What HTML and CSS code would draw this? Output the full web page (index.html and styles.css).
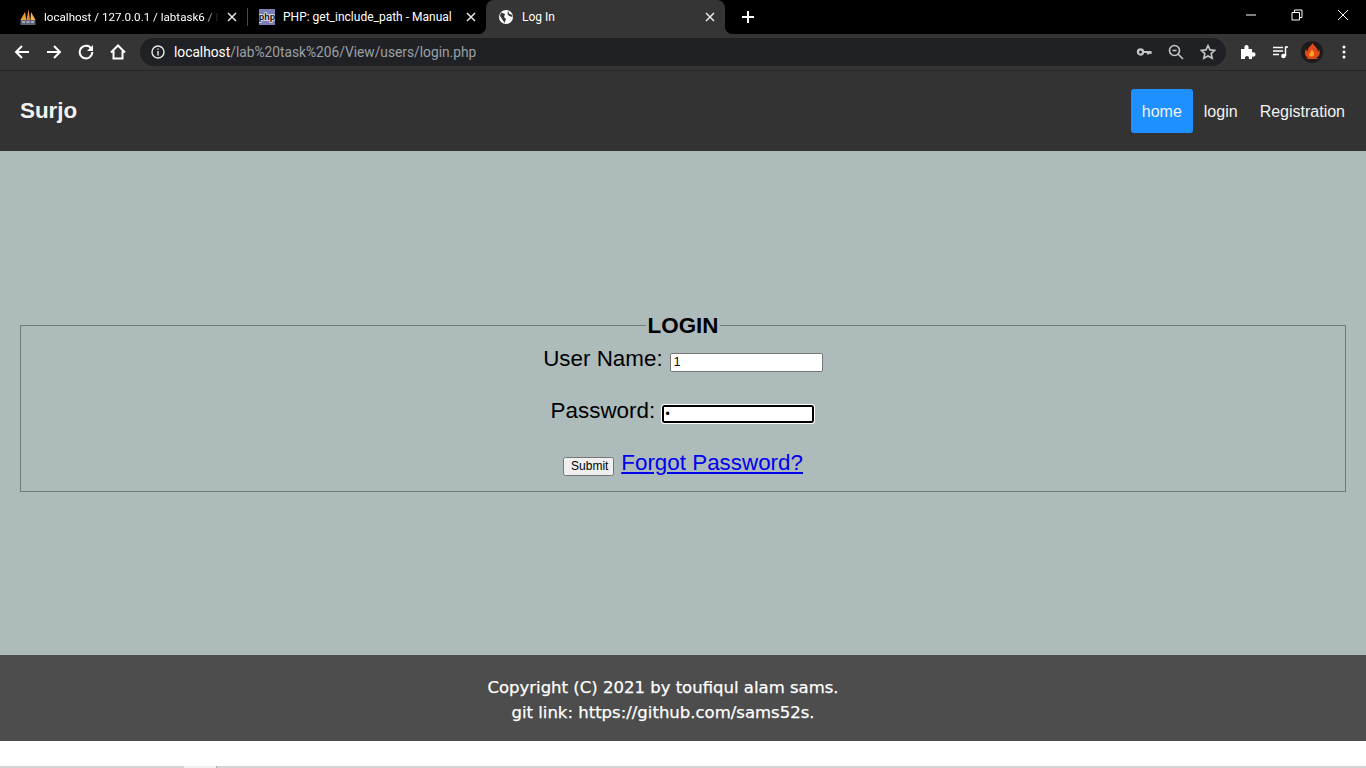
FILE: index.html
```html
<!DOCTYPE html>
<html lang="en">

<head>
    <meta charset="UTF-8" />
    <title>Log In</title>
    <link rel="stylesheet" href="styles.css">
</head>

<body>
    <div class="browser">
        <div class="tabstrip">
            <div class="tab">
                <svg class="favicon" viewBox="0 0 16 16">
                    <path d="M0.500 11 5 3l1.300 8z" fill="#f0a030" />
                    <path d="M6.500 11 8.500 0 10 11z" fill="#e8902a" />
                    <path d="M10.500 11 11 3l4.500 8z" fill="#f6b450" />
                    <rect x="0.500" y="11" width="15" height="5" fill="#5f6378" />
                    <path d="M2 13h3M6.500 13h3M11 13h3" stroke="#b8bccb" stroke-width="1.500" />
                </svg>
                <span class="tab-title fade">localhost / 127.0.0.1 / labtask6 / l</span>
                <svg class="tab-close" viewBox="0 0 10 10"><path d="M1 1l8 8M9 1l-8 8" /></svg>
            </div>
            <div class="tab tab-sep">
                <svg class="favicon" viewBox="0 0 16 16">
                    <rect width="16" height="16" fill="#7b7fb5" />
                    <text x="8" y="11" text-anchor="middle" class="php-mark">php</text>
                </svg>
                <span class="tab-title">PHP: get_include_path - Manual</span>
                <svg class="tab-close" viewBox="0 0 10 10"><path d="M1 1l8 8M9 1l-8 8" /></svg>
            </div>
            <div class="tab tab-active">
                <svg class="favicon" viewBox="0 0 16 16">
                    <circle cx="8" cy="8" r="7" fill="#fff" />
                    <path d="M3 3.500 7 5 6 8 8 10 6.500 14 4 10 2 7zM10 1.500l1 3 3 1.500 .5 2L11 7 9.500 5z" fill="#353535" />
                </svg>
                <span class="tab-title">Log In</span>
                <svg class="tab-close" viewBox="0 0 10 10"><path d="M1 1l8 8M9 1l-8 8" /></svg>
            </div>
            <svg class="new-tab" viewBox="0 0 12 12"><path d="M6 0v12M0 6h12" /></svg>
            <div class="win-controls">
                <div class="win-btn"><svg viewBox="0 0 12 12"><path d="M1 6h10" /></svg></div>
                <div class="win-btn"><svg viewBox="0 0 12 12"><path d="M1 3.500h7.500v7.500H1zM3.500 3.500V1H11v7.500H8.500" /></svg></div>
                <div class="win-btn"><svg viewBox="0 0 12 12"><path d="M1 1l10 10M11 1 1 11" /></svg></div>
            </div>
        </div>

        <div class="toolbar">
            <div class="tool"><svg viewBox="0 0 16 16"><path class="line" d="M15 8H2M8 2 2 8l6 6" /></svg></div>
            <div class="tool"><svg viewBox="0 0 16 16"><path class="line" d="M1 8h13M8 2l6 6-6 6" /></svg></div>
            <div class="tool"><svg viewBox="0 0 16 16"><path class="line" d="M13.500 5A6.300 6.300 0 1 0 14.300 8" /><path class="solid" d="M15 1v6H9z" /></svg></div>
            <div class="tool"><svg viewBox="0 0 16 16"><path class="line" d="M1 8.500 8 1.500l7 7M3.500 7v7.500h9V7" /></svg></div>

            <div class="omnibox">
                <svg class="info" viewBox="0 0 14 14">
                    <circle cx="7" cy="7" r="6" />
                    <path d="M7 6v4.500M7 3.500v1.300" />
                </svg>
                <span class="url"><b>localhost</b>/lab%20task%206/View/users/login.php</span>
                <div class="omni-icons">
                    <div class="tool"><svg viewBox="0 0 16 16"><circle class="key" cx="4.500" cy="8" r="2.600" /><path class="key" d="M7 8h8.500M12 8v2.500M14.500 8v2" /></svg></div>
                    <div class="tool"><svg viewBox="0 0 16 16"><circle class="dim" cx="6.500" cy="6.500" r="5" /><path class="dim" d="M4.500 6.500h4M10 10l5 5" /></svg></div>
                    <div class="tool"><svg viewBox="0 0 16 16"><path class="dim" d="M8 1.500l2 4.400 4.700.5-3.500 3.200 1 4.700L8 12l-4.200 2.300 1-4.700L1.300 6.400 6 5.900z" /></svg></div>
                </div>
            </div>

            <div class="tool-group">
                <div class="tool"><svg viewBox="0 0 16 16"><path class="solid" d="M1 5h3.500C4 2.500 5 1 6.500 1S9 2.500 8.500 5H12v3.500c2.500-.5 3.500.5 3.500 2s-1 2.500-3.500 2V15H9c.3-2-.7-3-2-3s-2.300 1-2 3H1z" /></svg></div>
                <div class="tool"><svg viewBox="0 0 16 16"><path class="thin" d="M1 3.500h10M1 7h10M1 10.500h6" /><path class="thin" d="M13.500 3v9" /><path class="thin" d="M13 3h3" /><circle class="solid" cx="11.500" cy="12" r="2.300" /></svg></div>
                <div class="tool">
                    <div class="avatar">
                        <svg viewBox="0 0 22 22">
                            <path d="M12 2c0 3 5 4 5 9 1-1 1-3 1-3 2 4 0 8-3 9l3 1H5l2-1c-3-2-4-5-2-9 0 1 1 2 2 2-1-3 3-5 5-8z" fill="#e2491a" />
                            <path d="M11 8c0 2 3 3 2 6-1 2-4 2-5 0 0-2 2-3 3-6z" fill="#f5a623" />
                        </svg>
                    </div>
                </div>
                <div class="tool"><svg viewBox="0 0 16 16"><circle class="solid" cx="8" cy="3" r="1.500" /><circle class="solid" cx="8" cy="8" r="1.500" /><circle class="solid" cx="8" cy="13" r="1.500" /></svg></div>
            </div>
        </div>
    </div>

    <nav class="topnav">
        <a class="brand" href="#">Surjo</a>
        <div class="nav-links">
            <a class="nav-link active" href="#">home</a>
            <a class="nav-link" href="#">login</a>
            <a class="nav-link" href="#">Registration</a>
        </div>
    </nav>

    <main class="content">
        <form class="login-form" onsubmit="return false">
            <fieldset>
                <legend>LOGIN</legend>
                User Name: <input class="name-input" type="text" name="username" value="1" />
                <br><br>
                Password: <input class="focused" type="password" name="password" value="1" />
                <br><br>
                <input class="submit-btn" type="submit" value="Submit" />
                <a href="#">Forgot Password?</a>
            </fieldset>
        </form>
    </main>

    <footer class="site-footer">
        Copyright (C) 2021 by toufiqul alam sams.<br>
        git link: https://github.com/sams52s.
    </footer>

    <div class="blank"></div>
    <div class="shelf"><span class="shelf-seg"></span></div>
</body>

</html>
```

FILE: styles.css
```css
* {
    box-sizing: border-box;
}

body {
    margin: 0;
    height: 768px;
    overflow: hidden;
    display: flex;
    flex-direction: column;
    font-family: "Liberation Sans", Arial, sans-serif;
    background-color: #fff;
}

/* browser chrome */
.browser {
    flex: none;
    font-family: Roboto, "Open Sans", sans-serif;
    color: #fff;
}

.tabstrip {
    height: 34px;
    background-color: #000;
    display: flex;
    padding-left: 8px;
}

.tab {
    position: relative;
    width: 239px;
    display: flex;
    align-items: center;
    padding: 0 10px 0 12px;
    gap: 8px;
}

.tab-sep::before {
    content: "";
    position: absolute;
    left: 0;
    top: 8px;
    height: 18px;
    width: 1px;
    background-color: #4a4a4a;
}

.tab-active {
    background-color: #353535;
    border-radius: 8px 8px 0 0;
}

.tab-active::before,
.tab-active::after {
    content: "";
    position: absolute;
    bottom: 0;
    width: 8px;
    height: 8px;
}

.tab-active::before {
    left: -8px;
    background: radial-gradient(circle at 0 0, #000 8px, #353535 8.5px);
}

.tab-active::after {
    right: -8px;
    background: radial-gradient(circle at 100% 0, #000 8px, #353535 8.5px);
}

.favicon {
    width: 16px;
    height: 16px;
    flex: none;
}

.php-mark {
    font-family: "Liberation Sans", sans-serif;
    font-size: 9px;
    font-weight: bold;
    fill: #111;
    stroke: #e8e8f0;
    stroke-width: 1.500px;
    paint-order: stroke;
}

.tab-title {
    flex: 1;
    min-width: 0;
    font-size: 12px;
    white-space: nowrap;
    overflow: hidden;
}

.fade {
    font-size: 11.600px;
    -webkit-mask-image: linear-gradient(to right, #000 92%, transparent 100%);
    mask-image: linear-gradient(to right, #000 92%, transparent 100%);
}

.tab-close {
    width: 10px;
    height: 10px;
    flex: none;
    fill: none;
    stroke: #e8eaed;
    stroke-width: 1.500;
}

.new-tab {
    width: 12px;
    height: 12px;
    margin: 11px 0 0 17px;
    fill: none;
    stroke: #fff;
    stroke-width: 2;
}

.win-controls {
    margin-left: auto;
    display: flex;
    align-items: flex-start;
}

.win-btn {
    width: 46px;
    height: 30px;
    display: flex;
    align-items: center;
    justify-content: center;
}

.win-btn svg {
    width: 12px;
    height: 12px;
    fill: none;
    stroke: #fff;
    stroke-width: 1;
}

.toolbar {
    height: 37px;
    background-color: #353535;
    border-bottom: 1px solid #262626;
    padding: 4px 6px;
    display: flex;
    align-items: center;
}

.tool {
    width: 32px;
    height: 28px;
    flex: none;
    display: flex;
    align-items: center;
    justify-content: center;
}

.tool svg {
    width: 16px;
    height: 16px;
    fill: none;
}

.line {
    stroke: #fff;
    stroke-width: 2;
    fill: none;
}

.thin {
    stroke: #fff;
    stroke-width: 1.500;
    fill: none;
}

.solid {
    fill: #fff;
}

.dim {
    stroke: #c4c7c5;
    stroke-width: 1.600;
    fill: none;
}

.key {
    stroke: #c4c7c5;
    stroke-width: 2.200;
    fill: none;
}

.omnibox {
    flex: 1;
    height: 28px;
    margin: 0 6px;
    padding-left: 11px;
    background-color: #202124;
    border-radius: 14px;
    display: flex;
    align-items: center;
}

.info {
    width: 14px;
    height: 14px;
    flex: none;
    fill: none;
    stroke: #e8eaed;
    stroke-width: 1.400;
}

.url {
    margin-left: 9px;
    font-size: 13.750px;
    color: #9aa0a6;
    white-space: nowrap;
}

.url b {
    font-weight: normal;
    color: #fff;
}

.omni-icons {
    margin-left: auto;
    display: flex;
    padding-right: 2px;
}

.tool-group {
    display: flex;
}

.avatar {
    width: 22px;
    height: 22px;
    border-radius: 50%;
    background-color: #1d1a19;
    overflow: hidden;
}

.avatar svg {
    width: 22px;
    height: 22px;
    display: block;
}

/* site nav */
.topnav {
    flex: none;
    height: 80px;
    background-color: #333;
    padding: 0 10px 0 20px;
    display: flex;
    align-items: center;
    justify-content: space-between;
}

.brand {
    font-size: 22.4px;
    font-weight: bold;
    color: #f2f2f2;
    text-decoration: none;
}

.nav-links {
    display: flex;
}

.nav-link {
    padding: 15px 11px 13px;
    font-size: 16px;
    line-height: 16px;
    color: #f2f2f2;
    text-decoration: none;
    border-radius: 3px;
}

.nav-link.active {
    background-color: dodgerblue;
}

/* login form */
.content {
    flex: none;
    height: 504px;
    background-color: #aebbbb;
    padding: 0 20px 1px;
    display: flex;
    flex-direction: column;
    justify-content: center;
}

.login-form {
    font-size: 22.4px;
    text-align: center;
    color: #000;
}

fieldset {
    margin: 0;
    padding-bottom: 15px;
    border: 1px solid #6f7a79;
}

legend {
    font-weight: bold;
}

input {
    font-family: "Liberation Sans", Arial, sans-serif;
    font-size: 12px;
    width: 153px;
    height: 19px;
}

.name-input {
    margin-left: 1px;
}

input.focused {
    width: 154px;
    height: 20px;
    border: 1px solid #fff;
    border-radius: 3px;
    box-shadow: inset 0 0 0 2px #000;
    outline: none;
    padding-left: 3px;
}

.submit-btn {
    width: 51px;
    height: 19px;
    margin-right: 1px;
    padding: 0 6px;
}

/* footer */
.site-footer {
    flex: none;
    height: 86px;
    padding: 20px 40px 0 0;
    background-color: #4d4d4d;
    color: #fff;
    font-family: "Comic Sans MS", "DejaVu Sans", sans-serif;
    font-size: 16.500px;
    line-height: 25px;
    text-align: center;
    -webkit-text-stroke: 0.25px #fff;
}

.blank {
    flex: 1;
}

.shelf {
    flex: none;
    height: 2px;
    padding-left: 184px;
    background-color: #d4d4d4;
}

.shelf-seg {
    display: block;
    width: 33px;
    height: 2px;
    background-color: #f0f0f0;
    border-right: 1px solid #aaa;
}
```
